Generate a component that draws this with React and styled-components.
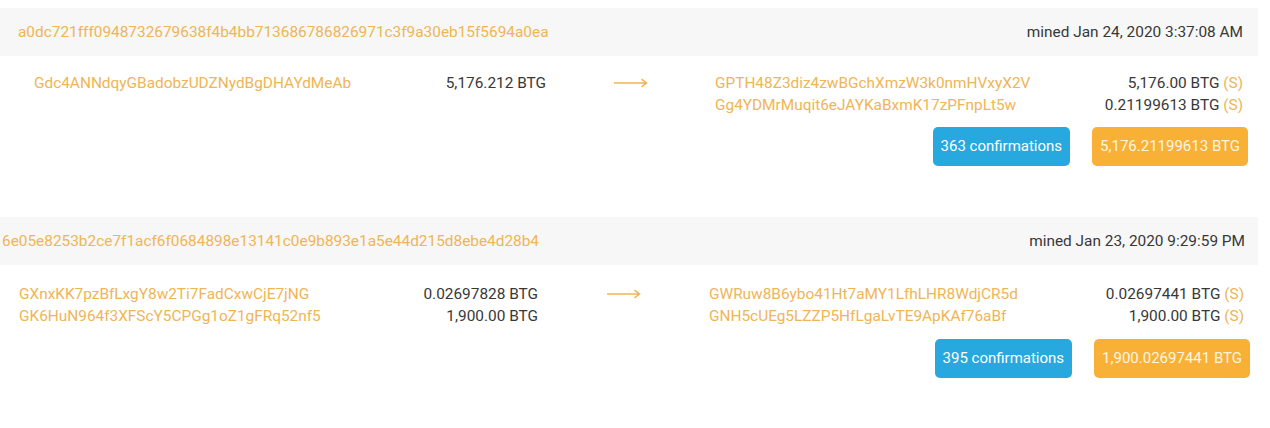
import styled, { createGlobalStyle } from 'styled-components'

const Global = createGlobalStyle`
    body {
        margin: 0;
        background: #ffffff;
        font-family: 'Roboto', 'Liberation Sans', sans-serif;
    }
`

const Page = styled.div`
    padding-top: 8px;
    width: 1258px;
`

const Tx = styled.div`
    margin-bottom: ${({gap}) => gap}px;
`

const Header = styled.div`
    background-color: #f7f7f7;
    height: 48px;
    display: flex;
    align-items: center;
    justify-content: space-between;
    padding-left: ${({left}) => left}px;
    padding-right: ${({right}) => right}px;
`

const Hash = styled.span`
    font-size: 15.4px;
    color: #efb556;
`

const Mined = styled.span`
    font-size: 15.4px;
    color: #383838;
`

const Body = styled.div`
    display: grid;
    grid-template-columns: ${({inW}) => inW}px 1fr ${({outW}) => outW}px;
    align-items: start;
    padding: ${({top}) => top}px ${({right}) => right}px 0 ${({left}) => left}px;
`

const Lines = styled.div`
    display: flex;
    flex-direction: column;
`

const Line = styled.div`
    display: flex;
    justify-content: space-between;
    height: 22px;
    line-height: 22px;
    font-size: 15.4px;
`

const Address = styled.span`
    color: #efb556;
`

const Amount = styled.span`
    color: #383838;
`

const Spent = styled.span`
    color: #efb556;
`

const ArrowCell = styled.div`
    display: flex;
    justify-content: center;
    height: 22px;
    align-items: center;
`

const Footer = styled.div`
    display: flex;
    justify-content: flex-end;
    gap: 22px;
    margin-top: ${({top}) => top}px;
    padding-right: ${({right}) => right}px;
`

const Badge = styled.div`
    background-color: ${({color}) => color};
    color: ${({text}) => text};
    font-size: 15px;
    height: 39px;
    line-height: 39px;
    padding: 0 8px;
    border-radius: 5px;
`

const Arrow = () => (
    <svg width="34" height="10" viewBox="0 0 34 10">
        <path d="M0 5 H32 M27.5 1.2 L32.5 5 L27.5 8.8" stroke="#efb556" strokeWidth="1.5" fill="none" />
    </svg>
)

const txs = [
    {
        hash: 'a0dc721fff0948732679638f4b4bb713686786826971c3f9a30eb15f5694a0ea',
        mined: 'mined Jan 24, 2020 3:37:08 AM',
        inputs: [['Gdc4ANNdqyGBadobzUDZNydBgDHAYdMeAb', '5,176.212 BTG']],
        outputs: [
            ['GPTH48Z3diz4zwBGchXmzW3k0nmHVxyX2V', '5,176.00 BTG'],
            ['Gg4YDMrMuqit6eJAYKaBxmK17zPFnpLt5w', '0.21199613 BTG'],
        ],
        confirmations: '363 confirmations',
        total: '5,176.21199613 BTG',
        hashLeft: 18, minedRight: 15,
        inStart: 34, inEnd: 546, outStart: 715, outEnd: 1243,
        bodyTop: 16, footTop: 11, badgeRight: 10, gap: 51,
    },
    {
        hash: '6e05e8253b2ce7f1acf6f0684898e13141c0e9b893e1a5e44d215d8ebe4d28b4',
        mined: 'mined Jan 23, 2020 9:29:59 PM',
        inputs: [
            ['GXnxKK7pzBfLxgY8w2Ti7FadCxwCjE7jNG', '0.02697828 BTG'],
            ['GK6HuN964f3XFScY5CPGg1oZ1gFRq52nf5', '1,900.00 BTG'],
        ],
        outputs: [
            ['GWRuw8B6ybo41Ht7aMY1LfhLHR8WdjCR5d', '0.02697441 BTG'],
            ['GNH5cUEg5LZZP5HfLgaLvTE9ApKAf76aBf', '1,900.00 BTG'],
        ],
        confirmations: '395 confirmations',
        total: '1,900.02697441 BTG',
        hashLeft: 2, minedRight: 13,
        inStart: 19, inEnd: 538, outStart: 709, outEnd: 1244,
        bodyTop: 18, footTop: 12, badgeRight: 8, gap: 0,
    },
]

const App = () => (
    <>
        <Global />
        <Page>
            {
                txs.map(tx => (
                    <Tx key={tx.hash} gap={tx.gap}>
                        <Header left={tx.hashLeft} right={tx.minedRight}>
                            <Hash>{tx.hash}</Hash>
                            <Mined>{tx.mined}</Mined>
                        </Header>
                        <Body
                            top={tx.bodyTop}
                            left={tx.inStart}
                            right={1258 - tx.outEnd}
                            inW={tx.inEnd - tx.inStart}
                            outW={tx.outEnd - tx.outStart}
                        >
                            <Lines>
                                {tx.inputs.map(([addr, amount]) => (
                                    <Line key={addr}>
                                        <Address>{addr}</Address>
                                        <Amount>{amount}</Amount>
                                    </Line>
                                ))}
                            </Lines>
                            <ArrowCell><Arrow /></ArrowCell>
                            <Lines>
                                {tx.outputs.map(([addr, amount]) => (
                                    <Line key={addr}>
                                        <Address>{addr}</Address>
                                        <Amount>{amount} <Spent>(S)</Spent></Amount>
                                    </Line>
                                ))}
                            </Lines>
                        </Body>
                        <Footer top={tx.footTop} right={tx.badgeRight}>
                            <Badge color="#27a8de" text="#ffffff">{tx.confirmations}</Badge>
                            <Badge color="#f8b136" text="#fff6e0">{tx.total}</Badge>
                        </Footer>
                    </Tx>
                ))
            }
        </Page>
    </>
)

export default App
